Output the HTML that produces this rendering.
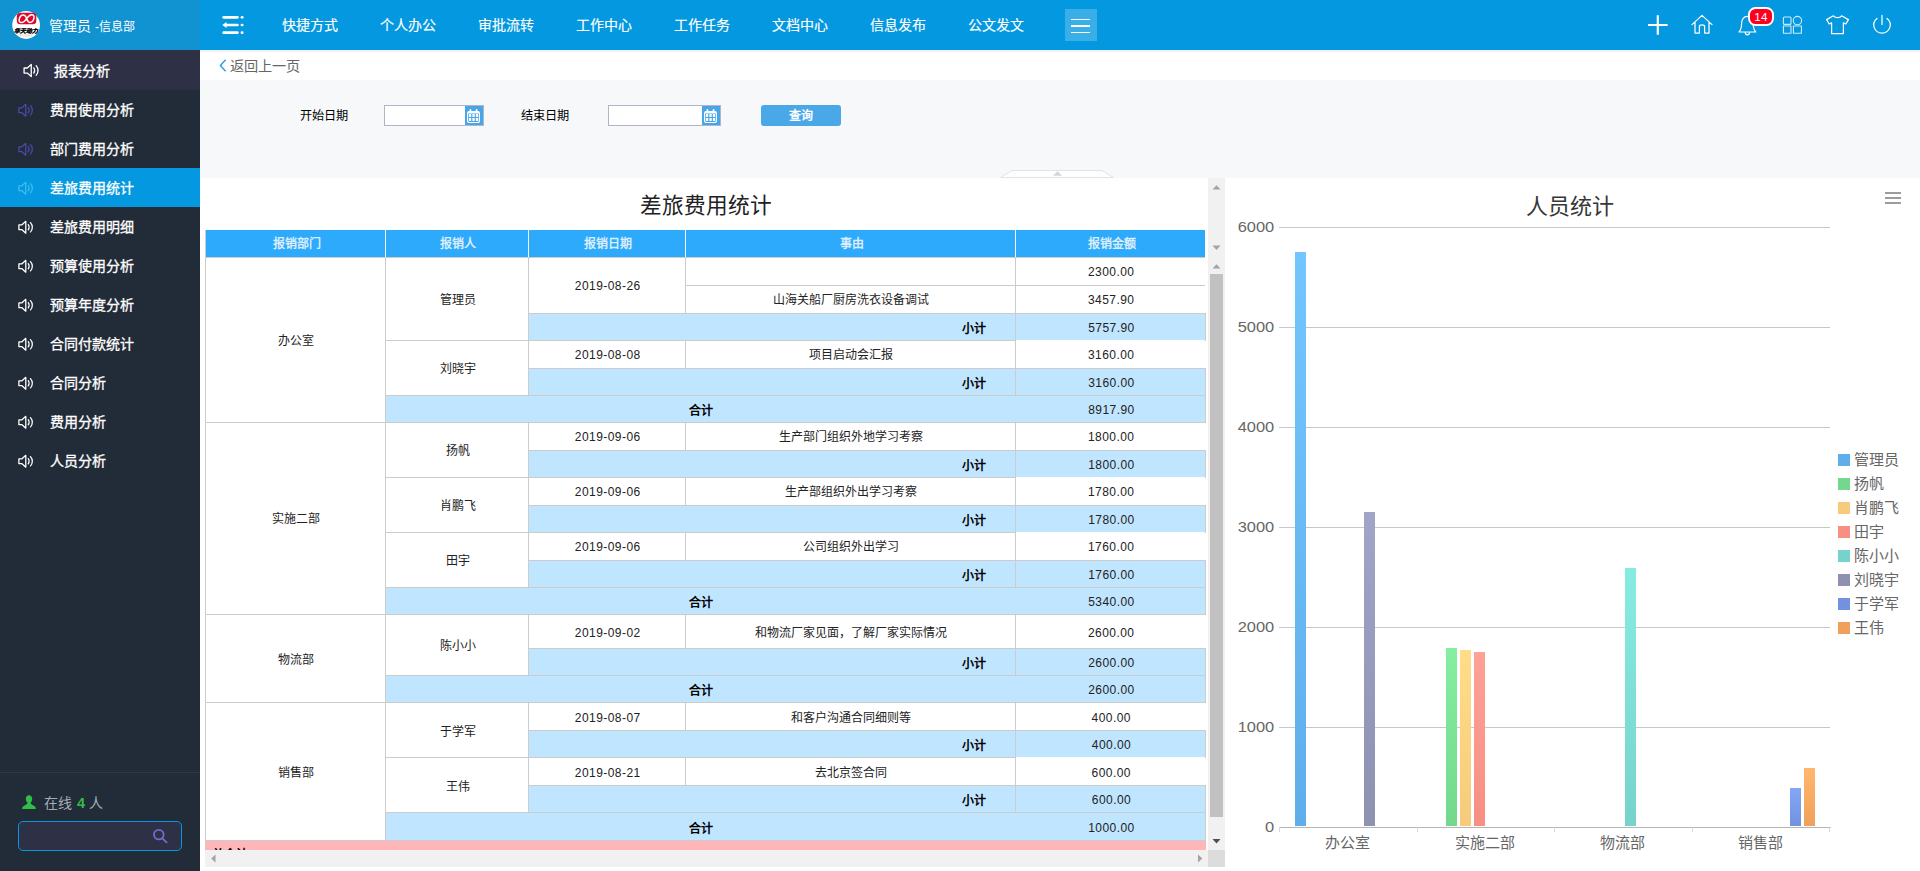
<!DOCTYPE html>
<html lang="zh-CN"><head><meta charset="utf-8"><title>差旅费用统计</title>
<style>
*{box-sizing:border-box;margin:0;padding:0}
html,body{width:1920px;height:871px;overflow:hidden;background:#fff}
body{font-family:"Liberation Sans",sans-serif;font-size:12px;color:#222;position:relative}
.abs{position:absolute}
#side{position:absolute;left:0;top:0;width:200px;height:871px;background:#222b38}
#sidetop{position:absolute;left:0;top:0;width:200px;height:50px;background:#1192d1}
#uname{position:absolute;left:49px;top:0;height:50px;line-height:52px;font-size:14px;color:#fff;white-space:nowrap}
#grp{position:absolute;left:0;top:50px;width:200px;height:40px;background:#2e3045}
#grp span{position:absolute;left:54px;top:0;line-height:42px;font-size:14px;-webkit-text-stroke:0.3px #fff;color:#fff;white-space:nowrap}
.mi{position:absolute;left:0;width:200px;height:39px}
.mi span{position:absolute;left:50px;top:0;line-height:40px;font-size:14px;-webkit-text-stroke:0.3px #fff;color:#fff;white-space:nowrap}
.mi svg{position:absolute;left:17.6px;top:13px}
.mi.on{background:#0398df}
#top{position:absolute;left:200px;top:0;width:1720px;height:50px;background:#0398df}
.nav{position:absolute;top:0;height:50px;line-height:50px;font-size:14px;color:#fff;white-space:nowrap;-webkit-text-stroke:0.15px #fff}
#crumb{position:absolute;left:200px;top:50px;width:1720px;height:30px;background:#fff}
#filter{position:absolute;left:200px;top:80px;width:1720px;height:98px;background:#f7f8fa}
.lbl{position:absolute;top:105px;height:21px;line-height:23.5px;font-size:12.2px;color:#000;white-space:nowrap}
.inp{position:absolute;top:105px;height:21px;background:#fff;border:1px solid #b1b5c9}
.cal{position:absolute;top:106px;width:18px;height:19px;background:#46a6ea}
.c{position:absolute;text-align:center;white-space:nowrap;font-size:12px;color:#222;overflow:hidden}
.n{letter-spacing:0.45px;text-indent:0.45px}
.hl{position:absolute;height:1px;background:#ccc}
.vl{position:absolute;width:1px;background:#ccc}
.b{font-weight:bold;color:#000}
.yl{position:absolute;left:1205px;width:69.2px;text-align:right;font-size:15.2px;transform:scaleX(1.08);transform-origin:right center;color:#666;height:20px;line-height:20px}
.xl{position:absolute;top:832px;width:138px;text-align:center;font-size:15px;color:#666;height:22px;line-height:22px}
.gl{position:absolute;left:1279px;width:551px;height:1px;background:#c8c8c8}
.lg{position:absolute;left:1838px;width:12px;height:12px}
.lt{position:absolute;left:1854px;font-size:15px;color:#666;height:24px;line-height:24px;white-space:nowrap}
</style></head><body>
<div id="side">
<div id="sidetop">
<svg class="abs" style="left:12px;top:11px" width="28" height="28" viewBox="0 0 28 28"><circle cx="14.1" cy="14" r="13.9" fill="#fff"/><rect x="4.8" y="1.8" width="19.5" height="11.5" rx="3.6" fill="#db0a2c"/><path d="M14.6 7.6 C12.6 10.6 11.2 11.6 9.4 11.6 C7.6 11.6 6.9 10.2 7.2 8.4 C7.6 6 9.4 3.9 11.4 3.9 C13 3.9 13.8 5.2 14.6 7.6 C15.4 10 16.2 11.4 17.8 11.4 C19.8 11.4 21.6 9.3 22 6.9 C22.3 5.1 21.6 3.7 19.8 3.7 C18 3.7 16.6 4.6 14.6 7.6 Z" fill="none" stroke="#fff" stroke-width="1.5"/><text x="14.1" y="21.7" font-size="5.8" font-weight="bold" font-style="italic" text-anchor="middle" fill="#111" stroke="#111" stroke-width="0.25" font-family="Liberation Sans, sans-serif">华天动力</text><text x="13.3" y="25.6" font-size="2.7" text-anchor="middle" fill="#c4b5a8" letter-spacing="0.5" font-family="Liberation Sans, sans-serif">UPOWER</text></svg>
<div id="uname">管理员 <span style="font-size:12px">-信息部</span></div>
</div>
<div id="grp"><div class="abs" style="left:22.5px;top:12.5px"><svg width="16.5" height="15" viewBox="0 0 14 13" fill="none" stroke="#fff" stroke-width="1.15" stroke-linejoin="round" stroke-linecap="round"><path d="M0.8 4.3 H3.6 L7 1.2 V11.8 L3.6 8.7 H0.8 Z"/><path d="M9.2 4.2 C10.2 5.4 10.2 7.6 9.2 8.8"/><path d="M11.2 2.3 C13.4 4.6 13.4 8.4 11.2 10.7"/></svg></div><span>报表分析</span></div>
<div class="mi" style="top:90px"><svg width="15.6" height="14.5" viewBox="0 0 14 13" fill="none" stroke="#4c48a8" stroke-width="1.15" stroke-linejoin="round" stroke-linecap="round"><path d="M0.8 4.3 H3.6 L7 1.2 V11.8 L3.6 8.7 H0.8 Z"/><path d="M9.2 4.2 C10.2 5.4 10.2 7.6 9.2 8.8"/><path d="M11.2 2.3 C13.4 4.6 13.4 8.4 11.2 10.7"/></svg><span>费用使用分析</span></div>
<div class="mi" style="top:129px"><svg width="15.6" height="14.5" viewBox="0 0 14 13" fill="none" stroke="#4c48a8" stroke-width="1.15" stroke-linejoin="round" stroke-linecap="round"><path d="M0.8 4.3 H3.6 L7 1.2 V11.8 L3.6 8.7 H0.8 Z"/><path d="M9.2 4.2 C10.2 5.4 10.2 7.6 9.2 8.8"/><path d="M11.2 2.3 C13.4 4.6 13.4 8.4 11.2 10.7"/></svg><span>部门费用分析</span></div>
<div class="mi on" style="top:168px"><svg width="15.6" height="14.5" viewBox="0 0 14 13" fill="none" stroke="#3fbdf0" stroke-width="1.15" stroke-linejoin="round" stroke-linecap="round"><path d="M0.8 4.3 H3.6 L7 1.2 V11.8 L3.6 8.7 H0.8 Z"/><path d="M9.2 4.2 C10.2 5.4 10.2 7.6 9.2 8.8"/><path d="M11.2 2.3 C13.4 4.6 13.4 8.4 11.2 10.7"/></svg><span>差旅费用统计</span></div>
<div class="mi" style="top:207px"><svg width="15.6" height="14.5" viewBox="0 0 14 13" fill="none" stroke="#fff" stroke-width="1.15" stroke-linejoin="round" stroke-linecap="round"><path d="M0.8 4.3 H3.6 L7 1.2 V11.8 L3.6 8.7 H0.8 Z"/><path d="M9.2 4.2 C10.2 5.4 10.2 7.6 9.2 8.8"/><path d="M11.2 2.3 C13.4 4.6 13.4 8.4 11.2 10.7"/></svg><span>差旅费用明细</span></div>
<div class="mi" style="top:246px"><svg width="15.6" height="14.5" viewBox="0 0 14 13" fill="none" stroke="#fff" stroke-width="1.15" stroke-linejoin="round" stroke-linecap="round"><path d="M0.8 4.3 H3.6 L7 1.2 V11.8 L3.6 8.7 H0.8 Z"/><path d="M9.2 4.2 C10.2 5.4 10.2 7.6 9.2 8.8"/><path d="M11.2 2.3 C13.4 4.6 13.4 8.4 11.2 10.7"/></svg><span>预算使用分析</span></div>
<div class="mi" style="top:285px"><svg width="15.6" height="14.5" viewBox="0 0 14 13" fill="none" stroke="#fff" stroke-width="1.15" stroke-linejoin="round" stroke-linecap="round"><path d="M0.8 4.3 H3.6 L7 1.2 V11.8 L3.6 8.7 H0.8 Z"/><path d="M9.2 4.2 C10.2 5.4 10.2 7.6 9.2 8.8"/><path d="M11.2 2.3 C13.4 4.6 13.4 8.4 11.2 10.7"/></svg><span>预算年度分析</span></div>
<div class="mi" style="top:324px"><svg width="15.6" height="14.5" viewBox="0 0 14 13" fill="none" stroke="#fff" stroke-width="1.15" stroke-linejoin="round" stroke-linecap="round"><path d="M0.8 4.3 H3.6 L7 1.2 V11.8 L3.6 8.7 H0.8 Z"/><path d="M9.2 4.2 C10.2 5.4 10.2 7.6 9.2 8.8"/><path d="M11.2 2.3 C13.4 4.6 13.4 8.4 11.2 10.7"/></svg><span>合同付款统计</span></div>
<div class="mi" style="top:363px"><svg width="15.6" height="14.5" viewBox="0 0 14 13" fill="none" stroke="#fff" stroke-width="1.15" stroke-linejoin="round" stroke-linecap="round"><path d="M0.8 4.3 H3.6 L7 1.2 V11.8 L3.6 8.7 H0.8 Z"/><path d="M9.2 4.2 C10.2 5.4 10.2 7.6 9.2 8.8"/><path d="M11.2 2.3 C13.4 4.6 13.4 8.4 11.2 10.7"/></svg><span>合同分析</span></div>
<div class="mi" style="top:402px"><svg width="15.6" height="14.5" viewBox="0 0 14 13" fill="none" stroke="#fff" stroke-width="1.15" stroke-linejoin="round" stroke-linecap="round"><path d="M0.8 4.3 H3.6 L7 1.2 V11.8 L3.6 8.7 H0.8 Z"/><path d="M9.2 4.2 C10.2 5.4 10.2 7.6 9.2 8.8"/><path d="M11.2 2.3 C13.4 4.6 13.4 8.4 11.2 10.7"/></svg><span>费用分析</span></div>
<div class="mi" style="top:441px"><svg width="15.6" height="14.5" viewBox="0 0 14 13" fill="none" stroke="#fff" stroke-width="1.15" stroke-linejoin="round" stroke-linecap="round"><path d="M0.8 4.3 H3.6 L7 1.2 V11.8 L3.6 8.7 H0.8 Z"/><path d="M9.2 4.2 C10.2 5.4 10.2 7.6 9.2 8.8"/><path d="M11.2 2.3 C13.4 4.6 13.4 8.4 11.2 10.7"/></svg><span>人员分析</span></div>
<div class="abs" style="left:0;top:772px;width:200px;height:1px;background:#34344d"></div>
<svg class="abs" style="left:22px;top:795px" width="14" height="14" viewBox="0 0 14 14"><path d="M7 0.2 C9 0.2 10.2 1.8 10.2 3.8 C10.2 5.6 9.4 7 8.4 7.8 C8.6 9 9.6 9.6 11.4 10.4 C13 11.1 13.8 11.8 13.9 14 H0.1 C0.2 11.8 1 11.1 2.6 10.4 C4.4 9.6 5.4 9 5.6 7.8 C4.6 7 3.8 5.6 3.8 3.8 C3.8 1.8 5 0.2 7 0.2 Z" fill="#2fbf47"/></svg>
<div class="abs" style="left:44px;top:792px;height:22px;line-height:22px;font-size:14px;color:#a4adb6;white-space:nowrap">在线 <span style="color:#2fbf47;font-weight:bold;font-size:14.5px;padding-left:1px">4</span> 人</div>
<div class="abs" style="left:18px;top:821px;width:164px;height:30px;border:1px solid #0398df;border-radius:5px;background:#2e3045"></div>
<svg class="abs" style="left:152px;top:828px" width="16" height="16" viewBox="0 0 16 16" fill="none" stroke="#7668cc" stroke-width="1.8" stroke-linecap="round"><circle cx="6.8" cy="6.6" r="4.8"/><path d="M10.4 10.4 L14.6 14.4"/></svg>
</div>
<div id="top"></div>
<svg class="abs" style="left:222px;top:15px" width="22" height="20" viewBox="0 0 22 20" fill="#fff"><rect x="0.3" y="1" width="16.5" height="2.7" rx="1.35"/><rect x="18.6" y="1" width="3" height="2.7" rx="1.35"/><rect x="4" y="8.65" width="12.8" height="2.7" rx="1.35"/><rect x="18.6" y="8.65" width="3" height="2.7" rx="1.35"/><path d="M0.2 10 L4.6 6.9 V13.1 Z"/><rect x="0.3" y="16.3" width="16.5" height="2.7" rx="1.35"/><rect x="18.6" y="16.3" width="3" height="2.7" rx="1.35"/></svg>
<div class="nav" style="left:282px">快捷方式</div>
<div class="nav" style="left:380px">个人办公</div>
<div class="nav" style="left:478px">审批流转</div>
<div class="nav" style="left:576px">工作中心</div>
<div class="nav" style="left:674px">工作任务</div>
<div class="nav" style="left:772px">文档中心</div>
<div class="nav" style="left:870px">信息发布</div>
<div class="nav" style="left:968px">公文发文</div>
<div class="abs" style="left:1065px;top:9px;width:32px;height:32px;background:#3aafe7"></div>
<div class="abs" style="left:1071px;top:18.5px;width:19px;height:1.7px;background:#fff"></div>
<div class="abs" style="left:1071px;top:25.1px;width:19px;height:1.7px;background:#fff"></div>
<div class="abs" style="left:1071px;top:31.6px;width:19px;height:1.7px;background:#fff"></div>
<svg class="abs" style="left:1640px;top:0" width="280" height="50" viewBox="1640 0 280 50" fill="none" stroke="#fff" stroke-linecap="round" stroke-linejoin="round"><path d="M1648 25 H1667.6 M1657.8 15.2 V34.8" stroke-width="2.2" stroke-linecap="butt"/><path d="M1692 24.6 L1702 15.4 L1712 24.6 M1695 22.4 V33 H1699.4 V26.6 C1699.4 24.2 1704.6 24.2 1704.6 26.6 V33 H1709 V22.4" stroke-width="1.25"/><path d="M1739 32 C1741.6 29.6 1741.4 27 1741.6 23.4 C1741.9 19 1744.2 16.4 1747.4 16.4 C1750.6 16.4 1752.9 19 1753.2 23.4 C1753.4 27 1753.2 29.6 1755.8 32 Z M1745.2 32.4 C1745.6 35.6 1749.2 35.6 1749.6 32.4" stroke-width="1.2"/><g stroke-width="1.1" stroke="#cfeaf9"><rect x="1783.4" y="17" width="7.6" height="7.4" rx="1"/><circle cx="1797.4" cy="20.6" r="4.2"/><rect x="1783.4" y="26" width="7.6" height="7.2"/><rect x="1793.4" y="26" width="8" height="7.2"/></g><path d="M1833.4 15.8 C1835.4 18.2 1839.6 18.2 1841.6 15.8 L1848.4 19.6 L1845.8 24 L1843.4 22.8 V33.6 H1831.6 V22.8 L1829.2 24 L1826.6 19.6 Z" stroke-width="1.25"/><path d="M1882 15.4 V24.4 M1877 18.4 C1870.6 23.6 1874.4 33 1882 33 C1889.6 33 1893.4 23.6 1887 18.4" stroke-width="1.25"/></svg>
<div class="abs" style="left:1748px;top:7px;width:26px;height:19px;border:2px solid #fffaf4;border-radius:7.5px;background:#fb0020;color:#fff;font-size:11.6px;line-height:16.6px;text-align:center;letter-spacing:0.2px">14</div>
<div id="crumb"></div>
<div class="abs" style="left:200px;top:50px;width:1720px;height:3px;background:linear-gradient(#e9ecee,#fff)"></div>
<svg class="abs" style="left:219px;top:59px" width="8" height="13" viewBox="0 0 8 13" fill="none" stroke="#2a9de2" stroke-width="1.4"><path d="M6.6 0.8 L1.4 6.5 L6.6 12.2"/></svg>
<div class="abs" style="left:230px;top:55px;height:22px;line-height:22px;font-size:14.2px;color:#666;white-space:nowrap">返回上一页</div>
<div id="filter"></div>
<div class="lbl" style="left:300px">开始日期</div>
<div class="lbl" style="left:521px">结束日期</div>
<div class="inp" style="left:384px;width:100px"></div><div class="cal" style="left:465px"><svg class="abs" style="left:2px;top:2.9px" width="13" height="14.2" viewBox="0 0 13 14.2"><rect x="0.6" y="2.5" width="11.8" height="11.1" rx="1.7" fill="none" stroke="#fff" stroke-width="1.2"/><path d="M0.6 4.6 V4 C0.6 3 1.3 2.5 2.3 2.5 H10.7 C11.7 2.5 12.4 3 12.4 4 V4.6 Z" fill="#fff"/><rect x="2.6" y="0" width="1.7" height="3.6" rx="0.85" fill="#fff"/><rect x="8.7" y="0" width="1.7" height="3.6" rx="0.85" fill="#fff"/><path d="M2 5.1h2.2v3H2z M5.4 5.1h2.3v3H5.4z M8.9 5.1h2.2v3H8.9z M2 9.1h2.2v3H2z M5.4 9.1h2.3v3H5.4z M8.9 9.1h2.2v3H8.9z" fill="#fff"/></svg></div>
<div class="inp" style="left:608px;width:113px"></div><div class="cal" style="left:702px"><svg class="abs" style="left:2px;top:2.9px" width="13" height="14.2" viewBox="0 0 13 14.2"><rect x="0.6" y="2.5" width="11.8" height="11.1" rx="1.7" fill="none" stroke="#fff" stroke-width="1.2"/><path d="M0.6 4.6 V4 C0.6 3 1.3 2.5 2.3 2.5 H10.7 C11.7 2.5 12.4 3 12.4 4 V4.6 Z" fill="#fff"/><rect x="2.6" y="0" width="1.7" height="3.6" rx="0.85" fill="#fff"/><rect x="8.7" y="0" width="1.7" height="3.6" rx="0.85" fill="#fff"/><path d="M2 5.1h2.2v3H2z M5.4 5.1h2.3v3H5.4z M8.9 5.1h2.2v3H8.9z M2 9.1h2.2v3H2z M5.4 9.1h2.3v3H5.4z M8.9 9.1h2.2v3H8.9z" fill="#fff"/></svg></div>
<div class="abs" style="left:761px;top:105px;width:80px;height:21px;border-radius:3px;background:#4aa8e8;color:#fff;font-size:12px;font-weight:bold;line-height:22px;text-align:center">查询</div>
<svg class="abs" style="left:998px;top:169px" width="118" height="10" viewBox="998 169 118 10"><path d="M1000.5 177.6 L1012 170.6 H1102 L1113.5 177.6 Z" fill="#fff" stroke="#e2e2e2" stroke-width="1"/><path d="M1057.5 171.2 L1062.2 175.8 H1052.8 Z" fill="#d6d6d6"/></svg>
<div class="abs" style="left:505px;top:179px;width:401px;height:52px;font-size:21.7px;line-height:54px;text-align:center;color:#222;white-space:nowrap">差旅费用统计</div>
<div class="abs" style="left:205px;top:230px;width:1000px;height:27px;background:#2eaafd"></div>
<div class="abs" style="left:385px;top:230px;width:1px;height:27px;background:#f4fbff"></div>
<div class="abs" style="left:528px;top:230px;width:1px;height:27px;background:#f4fbff"></div>
<div class="abs" style="left:685px;top:230px;width:1px;height:27px;background:#f4fbff"></div>
<div class="abs" style="left:1015px;top:230px;width:1px;height:27px;background:#f4fbff"></div>
<div class="c" style="left:207px;top:230px;width:179px;height:27px;line-height:29px;color:#d9edfc;font-weight:bold">报销部门</div>
<div class="c" style="left:387px;top:230px;width:142px;height:27px;line-height:29px;color:#d9edfc;font-weight:bold">报销人</div>
<div class="c" style="left:530px;top:230px;width:156px;height:27px;line-height:29px;color:#d9edfc;font-weight:bold">报销日期</div>
<div class="c" style="left:687px;top:230px;width:329px;height:27px;line-height:29px;color:#d9edfc;font-weight:bold">事由</div>
<div class="c" style="left:1017px;top:230px;width:189px;height:27px;line-height:29px;color:#d9edfc;font-weight:bold">报销金额</div>
<div class="c  n" style="left:1015px;top:257px;width:190px;height:28px;line-height:31px;padding-left:2px;">2300.00</div>
<div class="c " style="left:685px;top:285px;width:330px;height:28px;line-height:31px;padding-left:2px;">山海关船厂厨房洗衣设备调试</div>
<div class="c  n" style="left:1015px;top:285px;width:190px;height:28px;line-height:31px;padding-left:2px;">3457.90</div>
<div class="c b" style="left:528px;top:313px;width:487px;height:27px;line-height:32.4px;background:#c0e5ff;text-align:right;padding-right:29px;">小计</div>
<div class="c  n" style="left:1015px;top:313px;width:191px;height:27px;line-height:30px;background:#c0e5ff;padding-left:1.5px;">5757.90</div>
<div class="c  n" style="left:528px;top:340px;width:157px;height:28px;line-height:31px;padding-left:2px;">2019-08-08</div>
<div class="c " style="left:685px;top:340px;width:330px;height:28px;line-height:31px;padding-left:2px;">项目启动会汇报</div>
<div class="c  n" style="left:1015px;top:340px;width:190px;height:28px;line-height:31px;padding-left:2px;">3160.00</div>
<div class="c b" style="left:528px;top:368px;width:487px;height:27px;line-height:32.4px;background:#c0e5ff;text-align:right;padding-right:29px;">小计</div>
<div class="c  n" style="left:1015px;top:368px;width:191px;height:27px;line-height:30px;background:#c0e5ff;padding-left:1.5px;">3160.00</div>
<div class="c b" style="left:385px;top:395px;width:630px;height:27px;line-height:32.4px;background:#c0e5ff;padding-left:2px;">合计</div>
<div class="c  n" style="left:1015px;top:395px;width:191px;height:27px;line-height:30px;background:#c0e5ff;padding-left:1.5px;">8917.90</div>
<div class="c  n" style="left:528px;top:422px;width:157px;height:28px;line-height:31px;padding-left:2px;">2019-09-06</div>
<div class="c " style="left:685px;top:422px;width:330px;height:28px;line-height:31px;padding-left:2px;">生产部门组织外地学习考察</div>
<div class="c  n" style="left:1015px;top:422px;width:190px;height:28px;line-height:31px;padding-left:2px;">1800.00</div>
<div class="c b" style="left:528px;top:450px;width:487px;height:27px;line-height:32.4px;background:#c0e5ff;text-align:right;padding-right:29px;">小计</div>
<div class="c  n" style="left:1015px;top:450px;width:191px;height:27px;line-height:30px;background:#c0e5ff;padding-left:1.5px;">1800.00</div>
<div class="c  n" style="left:528px;top:477px;width:157px;height:28px;line-height:31px;padding-left:2px;">2019-09-06</div>
<div class="c " style="left:685px;top:477px;width:330px;height:28px;line-height:31px;padding-left:2px;">生产部组织外出学习考察</div>
<div class="c  n" style="left:1015px;top:477px;width:190px;height:28px;line-height:31px;padding-left:2px;">1780.00</div>
<div class="c b" style="left:528px;top:505px;width:487px;height:27px;line-height:32.4px;background:#c0e5ff;text-align:right;padding-right:29px;">小计</div>
<div class="c  n" style="left:1015px;top:505px;width:191px;height:27px;line-height:30px;background:#c0e5ff;padding-left:1.5px;">1780.00</div>
<div class="c  n" style="left:528px;top:532px;width:157px;height:28px;line-height:31px;padding-left:2px;">2019-09-06</div>
<div class="c " style="left:685px;top:532px;width:330px;height:28px;line-height:31px;padding-left:2px;">公司组织外出学习</div>
<div class="c  n" style="left:1015px;top:532px;width:190px;height:28px;line-height:31px;padding-left:2px;">1760.00</div>
<div class="c b" style="left:528px;top:560px;width:487px;height:27px;line-height:32.4px;background:#c0e5ff;text-align:right;padding-right:29px;">小计</div>
<div class="c  n" style="left:1015px;top:560px;width:191px;height:27px;line-height:30px;background:#c0e5ff;padding-left:1.5px;">1760.00</div>
<div class="c b" style="left:385px;top:587px;width:630px;height:27.5px;line-height:32.9px;background:#c0e5ff;padding-left:2px;">合计</div>
<div class="c  n" style="left:1015px;top:587px;width:191px;height:27.5px;line-height:30.5px;background:#c0e5ff;padding-left:1.5px;">5340.00</div>
<div class="c  n" style="left:528px;top:614.5px;width:157px;height:33.5px;line-height:37.7px;padding-left:2px;">2019-09-02</div>
<div class="c " style="left:685px;top:614.5px;width:330px;height:33.5px;line-height:37.7px;padding-left:2px;">和物流厂家见面，了解厂家实际情况</div>
<div class="c  n" style="left:1015px;top:614.5px;width:190px;height:33.5px;line-height:37.7px;padding-left:2px;">2600.00</div>
<div class="c b" style="left:528px;top:648px;width:487px;height:27px;line-height:32.4px;background:#c0e5ff;text-align:right;padding-right:29px;">小计</div>
<div class="c  n" style="left:1015px;top:648px;width:191px;height:27px;line-height:30px;background:#c0e5ff;padding-left:1.5px;">2600.00</div>
<div class="c b" style="left:385px;top:675px;width:630px;height:27.5px;line-height:32.9px;background:#c0e5ff;padding-left:2px;">合计</div>
<div class="c  n" style="left:1015px;top:675px;width:191px;height:27.5px;line-height:30.5px;background:#c0e5ff;padding-left:1.5px;">2600.00</div>
<div class="c  n" style="left:528px;top:702.5px;width:157px;height:27.5px;line-height:30.5px;padding-left:2px;">2019-08-07</div>
<div class="c " style="left:685px;top:702.5px;width:330px;height:27.5px;line-height:30.5px;padding-left:2px;">和客户沟通合同细则等</div>
<div class="c  n" style="left:1015px;top:702.5px;width:190px;height:27.5px;line-height:30.5px;padding-left:2px;">400.00</div>
<div class="c b" style="left:528px;top:730px;width:487px;height:27.5px;line-height:32.9px;background:#c0e5ff;text-align:right;padding-right:29px;">小计</div>
<div class="c  n" style="left:1015px;top:730px;width:191px;height:27.5px;line-height:30.5px;background:#c0e5ff;padding-left:1.5px;">400.00</div>
<div class="c  n" style="left:528px;top:757.5px;width:157px;height:27.5px;line-height:30.5px;padding-left:2px;">2019-08-21</div>
<div class="c " style="left:685px;top:757.5px;width:330px;height:27.5px;line-height:30.5px;padding-left:2px;">去北京签合同</div>
<div class="c  n" style="left:1015px;top:757.5px;width:190px;height:27.5px;line-height:30.5px;padding-left:2px;">600.00</div>
<div class="c b" style="left:528px;top:785px;width:487px;height:27.5px;line-height:32.9px;background:#c0e5ff;text-align:right;padding-right:29px;">小计</div>
<div class="c  n" style="left:1015px;top:785px;width:191px;height:27.5px;line-height:30.5px;background:#c0e5ff;padding-left:1.5px;">600.00</div>
<div class="c b" style="left:385px;top:812.5px;width:630px;height:27.5px;line-height:32.9px;background:#c0e5ff;padding-left:2px;">合计</div>
<div class="c  n" style="left:1015px;top:812.5px;width:191px;height:27.5px;line-height:30.5px;background:#c0e5ff;padding-left:1.5px;">1000.00</div>
<div class="c  n" style="left:528px;top:257px;width:157px;height:56px;line-height:59px;padding-left:2px;">2019-08-26</div>
<div class="c " style="left:385px;top:257px;width:143px;height:83px;line-height:86px;padding-left:2px;">管理员</div>
<div class="c " style="left:385px;top:340px;width:143px;height:55px;line-height:58px;padding-left:2px;">刘晓宇</div>
<div class="c " style="left:385px;top:422px;width:143px;height:55px;line-height:58px;padding-left:2px;">扬帆</div>
<div class="c " style="left:385px;top:477px;width:143px;height:55px;line-height:58px;padding-left:2px;">肖鹏飞</div>
<div class="c " style="left:385px;top:532px;width:143px;height:55px;line-height:58px;padding-left:2px;">田宇</div>
<div class="c " style="left:385px;top:614.5px;width:143px;height:60.5px;line-height:63.5px;padding-left:2px;">陈小小</div>
<div class="c " style="left:385px;top:702.5px;width:143px;height:55px;line-height:58px;padding-left:2px;">于学军</div>
<div class="c " style="left:385px;top:757.5px;width:143px;height:55px;line-height:58px;padding-left:2px;">王伟</div>
<div class="c " style="left:205px;top:257px;width:180px;height:165px;line-height:168px;padding-left:2px;">办公室</div>
<div class="c " style="left:205px;top:422px;width:180px;height:192.5px;line-height:195.5px;padding-left:2px;">实施二部</div>
<div class="c " style="left:205px;top:614.5px;width:180px;height:88px;line-height:91px;padding-left:2px;">物流部</div>
<div class="c " style="left:205px;top:702.5px;width:180px;height:137.5px;line-height:140.5px;padding-left:2px;">销售部</div>
<div class="abs" style="left:205px;top:840px;width:1001px;height:10px;background:#ffb6b9;overflow:hidden"><div class="abs b" style="left:7px;top:7px;font-size:12px;line-height:16px;white-space:nowrap">总合计</div><div class="abs n" style="left:811px;top:6.5px;width:190px;text-align:center;font-size:12px;line-height:16px;color:#222">17857.90</div></div>
<div class="hl" style="left:205px;top:257px;width:1000px"></div>
<div class="hl" style="left:685px;top:285px;width:520px"></div>
<div class="hl" style="left:528px;top:313px;width:677px"></div>
<div class="hl" style="left:385px;top:340px;width:820px"></div>
<div class="hl" style="left:528px;top:368px;width:677px"></div>
<div class="hl" style="left:385px;top:395px;width:820px"></div>
<div class="hl" style="left:205px;top:422px;width:1000px"></div>
<div class="hl" style="left:528px;top:450px;width:677px"></div>
<div class="hl" style="left:385px;top:477px;width:820px"></div>
<div class="hl" style="left:528px;top:505px;width:677px"></div>
<div class="hl" style="left:385px;top:532px;width:820px"></div>
<div class="hl" style="left:528px;top:560px;width:677px"></div>
<div class="hl" style="left:385px;top:587px;width:820px"></div>
<div class="hl" style="left:205px;top:614px;width:1000px"></div>
<div class="hl" style="left:528px;top:648px;width:677px"></div>
<div class="hl" style="left:385px;top:675px;width:820px"></div>
<div class="hl" style="left:205px;top:702px;width:1000px"></div>
<div class="hl" style="left:528px;top:730px;width:677px"></div>
<div class="hl" style="left:385px;top:757px;width:820px"></div>
<div class="hl" style="left:528px;top:785px;width:677px"></div>
<div class="hl" style="left:385px;top:812px;width:820px"></div>
<div class="hl" style="left:205px;top:840px;width:1000px"></div>
<div class="abs" style="left:1016px;top:340px;width:190px;height:1px;background:#fff"></div>
<div class="abs" style="left:1016px;top:477px;width:190px;height:1px;background:#fff"></div>
<div class="abs" style="left:1016px;top:532px;width:190px;height:1px;background:#fff"></div>
<div class="abs" style="left:1016px;top:757px;width:190px;height:1px;background:#fff"></div>
<div class="vl" style="left:205px;top:230px;height:621px"></div>
<div class="vl" style="left:385px;top:257px;height:584px"></div>
<div class="vl" style="left:528px;top:257px;height:29px"></div>
<div class="vl" style="left:685px;top:257px;height:29px"></div>
<div class="vl" style="left:1015px;top:257px;height:29px"></div>
<div class="vl" style="left:528px;top:285px;height:29px"></div>
<div class="vl" style="left:685px;top:285px;height:29px"></div>
<div class="vl" style="left:1015px;top:285px;height:29px"></div>
<div class="vl" style="left:528px;top:313px;height:28px"></div>
<div class="vl" style="left:1015px;top:313px;height:28px"></div>
<div class="vl" style="left:1205px;top:313px;height:28px"></div>
<div class="vl" style="left:528px;top:340px;height:29px"></div>
<div class="vl" style="left:685px;top:340px;height:29px"></div>
<div class="vl" style="left:1015px;top:340px;height:29px"></div>
<div class="vl" style="left:528px;top:368px;height:28px"></div>
<div class="vl" style="left:1015px;top:368px;height:28px"></div>
<div class="vl" style="left:1205px;top:368px;height:28px"></div>
<div class="vl" style="left:1205px;top:395px;height:28px"></div>
<div class="vl" style="left:528px;top:422px;height:29px"></div>
<div class="vl" style="left:685px;top:422px;height:29px"></div>
<div class="vl" style="left:1015px;top:422px;height:29px"></div>
<div class="vl" style="left:528px;top:450px;height:28px"></div>
<div class="vl" style="left:1015px;top:450px;height:28px"></div>
<div class="vl" style="left:1205px;top:450px;height:28px"></div>
<div class="vl" style="left:528px;top:477px;height:29px"></div>
<div class="vl" style="left:685px;top:477px;height:29px"></div>
<div class="vl" style="left:1015px;top:477px;height:29px"></div>
<div class="vl" style="left:528px;top:505px;height:28px"></div>
<div class="vl" style="left:1015px;top:505px;height:28px"></div>
<div class="vl" style="left:1205px;top:505px;height:28px"></div>
<div class="vl" style="left:528px;top:532px;height:29px"></div>
<div class="vl" style="left:685px;top:532px;height:29px"></div>
<div class="vl" style="left:1015px;top:532px;height:29px"></div>
<div class="vl" style="left:528px;top:560px;height:28px"></div>
<div class="vl" style="left:1015px;top:560px;height:28px"></div>
<div class="vl" style="left:1205px;top:560px;height:28px"></div>
<div class="vl" style="left:1205px;top:587px;height:28px"></div>
<div class="vl" style="left:528px;top:614px;height:35px"></div>
<div class="vl" style="left:685px;top:614px;height:35px"></div>
<div class="vl" style="left:1015px;top:614px;height:35px"></div>
<div class="vl" style="left:528px;top:648px;height:28px"></div>
<div class="vl" style="left:1015px;top:648px;height:28px"></div>
<div class="vl" style="left:1205px;top:648px;height:28px"></div>
<div class="vl" style="left:1205px;top:675px;height:28px"></div>
<div class="vl" style="left:528px;top:702px;height:29px"></div>
<div class="vl" style="left:685px;top:702px;height:29px"></div>
<div class="vl" style="left:1015px;top:702px;height:29px"></div>
<div class="vl" style="left:528px;top:730px;height:28px"></div>
<div class="vl" style="left:1015px;top:730px;height:28px"></div>
<div class="vl" style="left:1205px;top:730px;height:28px"></div>
<div class="vl" style="left:528px;top:757px;height:29px"></div>
<div class="vl" style="left:685px;top:757px;height:29px"></div>
<div class="vl" style="left:1015px;top:757px;height:29px"></div>
<div class="vl" style="left:528px;top:785px;height:28px"></div>
<div class="vl" style="left:1015px;top:785px;height:28px"></div>
<div class="vl" style="left:1205px;top:785px;height:28px"></div>
<div class="vl" style="left:1205px;top:812px;height:29px"></div>
<div class="abs" style="left:1208px;top:178px;width:17px;height:672px;background:#f1f1f1"></div>
<div class="abs" style="left:1210px;top:274px;width:13px;height:543px;background:#c1c1c1"></div>
<div class="abs" style="left:205px;top:850px;width:1003px;height:17px;background:#f1f1f1"></div>
<div class="abs" style="left:1208px;top:850px;width:17px;height:17px;background:#dcdcdc"></div>
<svg class="abs" style="left:1208px;top:178px" width="17" height="690" viewBox="0 0 17 690"><path d="M4.5 11.5 L8.5 7.2 L12.5 11.5 Z" fill="#a3a3a3"/><path d="M4.5 67.6 L8.5 72 L12.5 67.6 Z" fill="#a3a3a3"/><path d="M4.5 90.5 L8.5 86.2 L12.5 90.5 Z" fill="#a3a3a3"/><path d="M4.5 661 L8.5 665.4 L12.5 661 Z" fill="#505050"/></svg>
<svg class="abs" style="left:204px;top:850px" width="1004" height="17" viewBox="4 0 1004 17"><path d="M15.5 4.6 L11.2 8.5 L15.5 12.4 Z" fill="#a3a3a3"/><path d="M998 4.6 L1002.3 8.5 L998 12.4 Z" fill="#a3a3a3"/></svg>
<div class="abs" style="left:1470px;top:190px;width:200px;height:32px;line-height:33px;text-align:center;font-size:22px;color:#383838;white-space:nowrap">人员统计</div>
<div class="abs" style="left:1885px;top:192px;width:16px;height:2px;background:#9c9c9c"></div>
<div class="abs" style="left:1885px;top:197px;width:16px;height:2px;background:#9c9c9c"></div>
<div class="abs" style="left:1885px;top:202px;width:16px;height:2px;background:#9c9c9c"></div>
<div class="gl" style="top:227px"></div>
<div class="yl" style="top:217px">6000</div>
<div class="gl" style="top:327px"></div>
<div class="yl" style="top:317px">5000</div>
<div class="gl" style="top:427px"></div>
<div class="yl" style="top:417px">4000</div>
<div class="gl" style="top:527px"></div>
<div class="yl" style="top:517px">3000</div>
<div class="gl" style="top:627px"></div>
<div class="yl" style="top:617px">2000</div>
<div class="gl" style="top:727px"></div>
<div class="yl" style="top:717px">1000</div>
<div class="gl" style="top:827px"></div>
<div class="yl" style="top:817px">0</div>
<div class="abs" style="left:1279px;top:827px;width:552px;height:1px;background:#b5b5b5"></div>
<div class="abs" style="left:1279px;top:827px;width:1px;height:5px;background:#d8d8e4"></div>
<div class="abs" style="left:1416.5px;top:827px;width:1px;height:5px;background:#d8d8e4"></div>
<div class="abs" style="left:1554px;top:827px;width:1px;height:5px;background:#d8d8e4"></div>
<div class="abs" style="left:1691.5px;top:827px;width:1px;height:5px;background:#d8d8e4"></div>
<div class="abs" style="left:1829px;top:827px;width:1px;height:5px;background:#d8d8e4"></div>
<div class="xl" style="left:1278.5px">办公室</div>
<div class="xl" style="left:1416px">实施二部</div>
<div class="xl" style="left:1553.5px">物流部</div>
<div class="xl" style="left:1691px">销售部</div>
<div class="abs" style="left:1295.00px;top:252.21px;width:10.7px;height:574.19px;background:linear-gradient(#72c6ff,#5eaeeb)"></div>
<div class="lg" style="top:454px;background:#5eaeeb"></div>
<div class="lt" style="top:448px">管理员</div>
<div class="abs" style="left:1446.00px;top:648.00px;width:10.7px;height:178.40px;background:linear-gradient(#85eea0,#73d88d)"></div>
<div class="lg" style="top:478px;background:#73d88d"></div>
<div class="lt" style="top:472px">扬帆</div>
<div class="abs" style="left:1460.00px;top:650.00px;width:10.7px;height:176.40px;background:linear-gradient(#ffdd8a,#f7ca7c)"></div>
<div class="lg" style="top:502px;background:#f7ca7c"></div>
<div class="lt" style="top:496px">肖鹏飞</div>
<div class="abs" style="left:1474.00px;top:652.00px;width:10.7px;height:174.40px;background:linear-gradient(#ffa196,#f78f83)"></div>
<div class="lg" style="top:526px;background:#f78f83"></div>
<div class="lt" style="top:520px">田宇</div>
<div class="abs" style="left:1625.00px;top:568.00px;width:10.7px;height:258.40px;background:linear-gradient(#88ebe2,#76d3cb)"></div>
<div class="lg" style="top:550px;background:#76d3cb"></div>
<div class="lt" style="top:544px">陈小小</div>
<div class="abs" style="left:1364.00px;top:512.00px;width:10.7px;height:314.40px;background:linear-gradient(#a2a4c8,#8f91b1)"></div>
<div class="lg" style="top:574px;background:#8f91b1"></div>
<div class="lt" style="top:568px">刘晓宇</div>
<div class="abs" style="left:1790.00px;top:788.00px;width:10.7px;height:38.40px;background:linear-gradient(#85a6f6,#7292e0)"></div>
<div class="lg" style="top:598px;background:#7292e0"></div>
<div class="lt" style="top:592px">于学军</div>
<div class="abs" style="left:1804.00px;top:768.00px;width:10.7px;height:58.40px;background:linear-gradient(#ffb76f,#f0a05c)"></div>
<div class="lg" style="top:622px;background:#f0a05c"></div>
<div class="lt" style="top:616px">王伟</div>
</body></html>
